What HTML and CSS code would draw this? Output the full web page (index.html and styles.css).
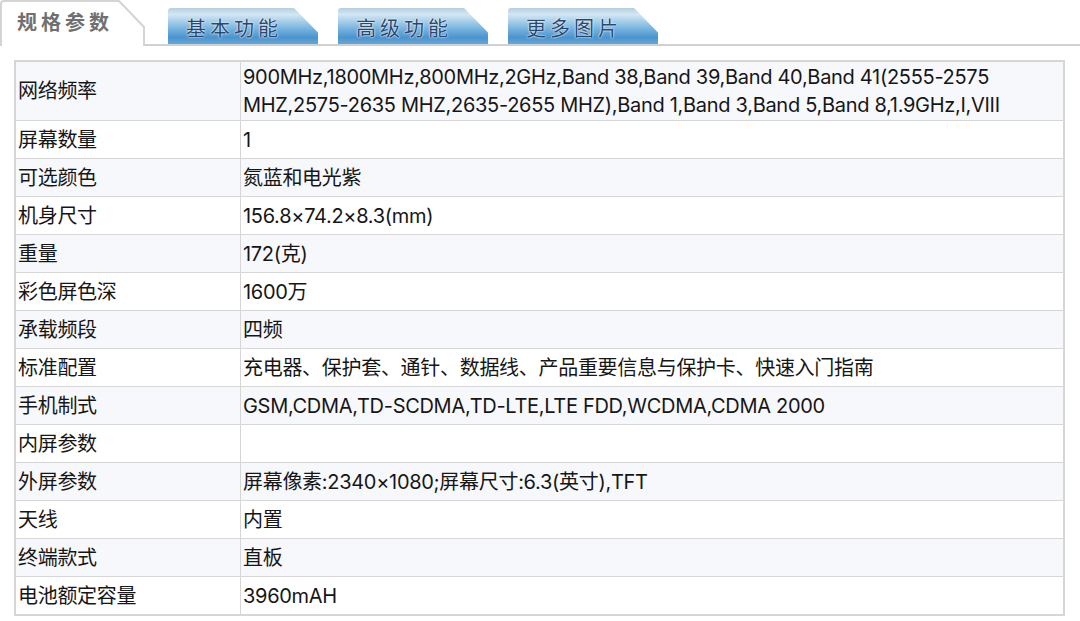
FILE: index.html
```html
<!DOCTYPE html>
<html lang="zh-CN">
<head>
<meta charset="utf-8">
<title>规格参数</title>
<link rel="stylesheet" href="styles.css">
</head>
<body>
<div class="page">
  <div class="tabs">
    <div class="tab tab-active">
      <svg class="tab-shape" width="146" height="46" viewBox="0 0 146 46">
        <path d="M1 46 L1 4 Q1 1 4 1 L119 1 L144 27 L144 46" fill="#fff" stroke="#d4d4d4" stroke-width="2"/>
      </svg>
      <span class="tab-label">规格参数</span>
    </div>
    <div class="tab tab-blue"><span>基本功能</span></div>
    <div class="tab tab-blue"><span>高级功能</span></div>
    <div class="tab tab-blue"><span>更多图片</span></div>
    <div class="tab-rest"></div>
  </div>

  <table class="spec">
    <tr><td class="k">网络频率</td><td class="v">900MHz,1800MHz,800MHz,2GHz,Band 38,Band 39,Band 40,Band 41(2555-2575 MHZ,2575-2635 MHZ,2635-2655 MHZ),Band 1,Band 3,Band 5,Band 8,1.9GHz,I,VIII</td></tr>
    <tr><td class="k">屏幕数量</td><td class="v">1</td></tr>
    <tr><td class="k">可选颜色</td><td class="v">氮蓝和电光紫</td></tr>
    <tr><td class="k">机身尺寸</td><td class="v">156.8×74.2×8.3(mm)</td></tr>
    <tr><td class="k">重量</td><td class="v">172(克)</td></tr>
    <tr><td class="k">彩色屏色深</td><td class="v">1600万</td></tr>
    <tr><td class="k">承载频段</td><td class="v">四频</td></tr>
    <tr><td class="k">标准配置</td><td class="v">充电器、保护套、通针、数据线、产品重要信息与保护卡、快速入门指南</td></tr>
    <tr><td class="k">手机制式</td><td class="v">GSM,CDMA,TD-SCDMA,TD-LTE,LTE FDD,WCDMA,CDMA 2000</td></tr>
    <tr><td class="k">内屏参数</td><td class="v"></td></tr>
    <tr><td class="k">外屏参数</td><td class="v">屏幕像素:2340×1080;屏幕尺寸:6.3(英寸),TFT</td></tr>
    <tr><td class="k">天线</td><td class="v">内置</td></tr>
    <tr><td class="k">终端款式</td><td class="v">直板</td></tr>
    <tr><td class="k">电池额定容量</td><td class="v">3960mAH</td></tr>
  </table>
</div>
</body>
</html>
```

FILE: styles.css
```css
html, body {
  margin: 0;
  padding: 0;
  background: #ffffff;
}

.page {
  width: 1080px;
  height: 621px;
  overflow: hidden;
  font-family: "Inter", "Noto Sans CJK SC", sans-serif;
}

.tabs {
  display: flex;
  align-items: flex-end;
  height: 46px;
  background: linear-gradient(#d0d0d0, #d0d0d0) no-repeat 145px 44px / 935px 2px;
}

.tab {
  position: relative;
  flex: none;
}

.tab-active {
  width: 146px;
  height: 46px;
  display: flex;
  align-items: flex-start;
}

.tab-shape {
  position: absolute;
  left: 0;
  top: 0;
}

.tab-label {
  position: relative;
  margin: 8px 0 0 17px;
  font-family: "Noto Sans CJK SC", sans-serif;
  font-size: 20px;
  font-weight: 700;
  line-height: 28px;
  letter-spacing: 4px;
  color: #707070;
}

.tab-blue {
  width: 150px;
  height: 36px;
  margin-left: 22px;
  margin-bottom: 2px;
  display: flex;
  align-items: center;
  padding-left: 18px;
  box-sizing: border-box;
  border-radius: 3px 0 0 0;
  clip-path: polygon(0 0, 84% 0, 100% 68%, 100% 100%, 0 100%);
  background: linear-gradient(to bottom, #b4cfdf 0%, #d3e7f3 18%, #a9d0ea 36%, #76b3de 58%, #4a94cf 82%, #66a8d8 100%);
}

.tab-blue + .tab-blue {
  margin-left: 20px;
}

.tab-blue span {
  font-family: "Noto Sans CJK SC", sans-serif;
  font-size: 20px;
  line-height: 24px;
  margin-top: 3px;
  letter-spacing: 4px;
  color: #284870;
  text-shadow: 0 0 2px #ffffff, 0 0 1px #ffffff;
}

.tab-rest {
  flex: 1;
}

.spec {
  margin: 14px 0 0 14px;
  width: 1051px;
  border-collapse: collapse;
  border: 2px solid #d6d6d6;
  font-size: 20px;
  letter-spacing: -0.3px;
  color: #161616;
}

.spec td {
  border: 1px solid #d6d6d6;
  padding: 1px 2px;
  height: 35px;
  line-height: 28px;
  vertical-align: middle;
}

.spec tr:nth-child(odd) td {
  background: #f7f8fb;
}

.spec .k {
  width: 220px;
}
```
